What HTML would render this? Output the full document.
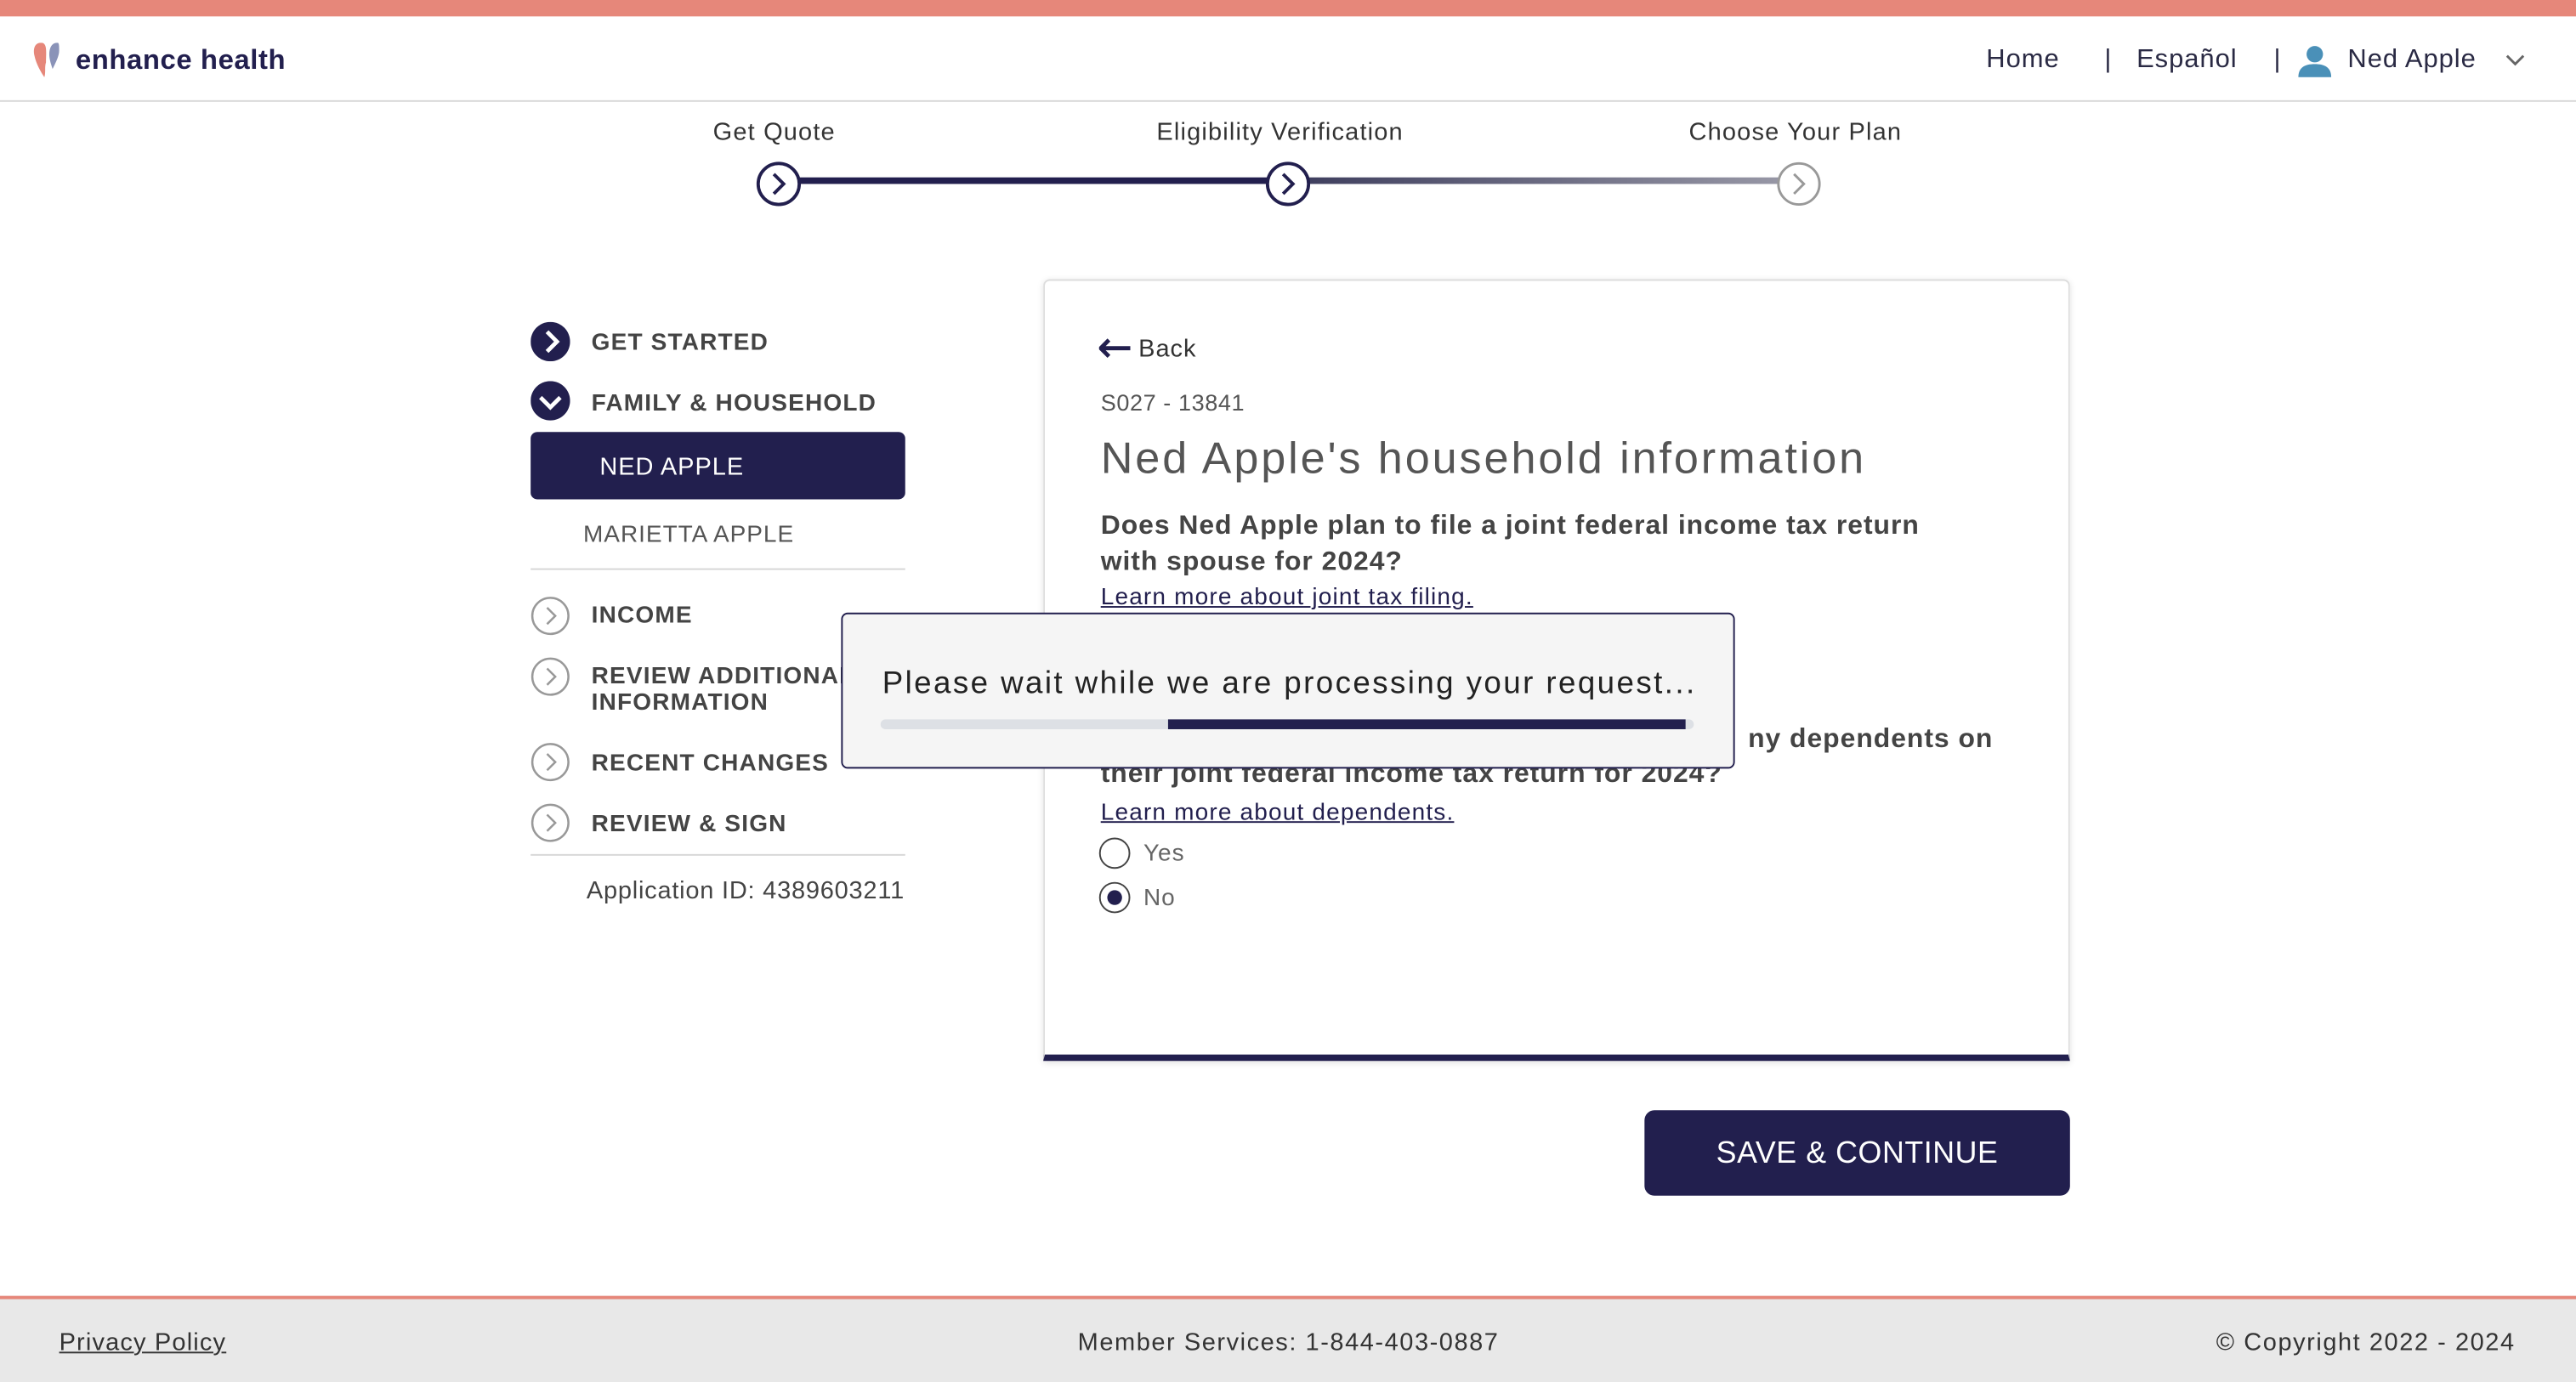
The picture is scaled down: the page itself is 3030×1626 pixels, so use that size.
<!DOCTYPE html>
<html><head><meta charset="utf-8"><style>
*{box-sizing:border-box;margin:0;padding:0}
html,body{width:3030px;height:1626px;overflow:hidden;background:#fff}
#w{width:1568px;height:841.5px;position:relative;transform:scale(1.9324);transform-origin:0 0;font-family:"Liberation Sans",sans-serif;color:#444}
.a{position:absolute}
.nav{color:#2a2a44;font-size:16px;letter-spacing:.5px}
.side{font-weight:bold;font-size:14.5px;color:#444;letter-spacing:.6px}
</style></head><body><div id="w">
<div class="a" style="left:0;top:0;width:1568px;height:10px;background:#e6877a"></div>
<div class="a" style="left:0;top:61px;width:1568px;height:1px;background:#d9d9d9"></div>
<svg class="a" style="left:20px;top:26px" width="24" height="22" viewBox="0 0 24 22"><path d="M5 0C1 0 0 4 1 8c1 5 4 10 6 13 1-3 0-6 1-9C8 6 9 0 5 0z" fill="#e6877a"/><path d="M15 0c-4 0-5 4-5 7 0 3 1 6 2 9 2-4 4-8 4-11 0-3-0-5-1-5z" fill="#8a93b8"/></svg>
<div class="a" style="left:46px;top:27px;font-size:17px;font-weight:bold;color:#221f4e;letter-spacing:.3px">enhance health</div>
<div class="a nav" style="left:1209px;top:28px">Home</div>
<div class="a nav" style="left:1281px;top:28px">|&nbsp;&nbsp; Español</div>
<div class="a nav" style="left:1384px;top:28px">|</div>
<svg class="a" style="left:1398px;top:27px" width="22" height="20" viewBox="0 0 22 20"><circle cx="11" cy="6" r="5" fill="#4a90b8"/><path d="M1 20c0-6 4-8 10-8s10 2 10 8z" fill="#4a90b8"/></svg>
<div class="a nav" style="left:1429px;top:28px">Ned Apple</div>
<svg class="a" style="left:1525px;top:33px" width="12" height="8"><path d="M1 1l5 5 5-5" stroke="#666" fill="none" stroke-width="1.5"/></svg>

<div class="a" style="left:434px;top:72px;font-size:15px;color:#333;letter-spacing:.6px">Get Quote</div>
<div class="a" style="left:704px;top:72px;font-size:15px;color:#333;letter-spacing:.6px">Eligibility Verification</div>
<div class="a" style="left:1028px;top:72px;font-size:15px;color:#333;letter-spacing:.6px">Choose Your Plan</div>
<div class="a" style="left:474px;top:108px;width:310px;height:4px;background:#221f4e"></div>
<div class="a" style="left:784px;top:108px;width:310px;height:4px;background:linear-gradient(90deg,#3c3c5c,#9a9aa8)"></div>
<svg class="a" style="left:460px;top:98px" width="28" height="28"><circle cx="14" cy="14" r="12.5" fill="#fff" stroke="#221f4e" stroke-width="2"/><path d="M11 8l6 6-6 6" stroke="#221f4e" fill="none" stroke-width="2"/></svg>
<svg class="a" style="left:770px;top:98px" width="28" height="28"><circle cx="14" cy="14" r="12.5" fill="#fff" stroke="#221f4e" stroke-width="2"/><path d="M11 8l6 6-6 6" stroke="#221f4e" fill="none" stroke-width="2"/></svg>
<svg class="a" style="left:1081px;top:98px" width="28" height="28"><circle cx="14" cy="14" r="12.5" fill="#fff" stroke="#999" stroke-width="1.5"/><path d="M11 8l6 6-6 6" stroke="#999" fill="none" stroke-width="1.5"/></svg>

<svg class="a" style="left:323px;top:196px" width="24" height="24"><circle cx="12" cy="12" r="12" fill="#221f4e"/><path d="M10 6l6 6-6 6" stroke="#fff" fill="none" stroke-width="2.5"/></svg>
<div class="a side" style="left:360px;top:201px">GET STARTED</div>
<svg class="a" style="left:323px;top:232px" width="24" height="24"><circle cx="12" cy="12" r="12" fill="#221f4e"/><path d="M6 10l6 6 6-6" stroke="#fff" fill="none" stroke-width="2.5"/></svg>
<div class="a side" style="left:360px;top:238px">FAMILY &amp; HOUSEHOLD</div>
<div class="a" style="left:323px;top:263px;width:228px;height:41px;background:#221f4e;border-radius:4px;color:#fff;font-size:15px;padding:13px 0 0 42px;letter-spacing:.5px">NED APPLE</div>
<div class="a" style="left:355px;top:318px;font-size:14.5px;color:#555;letter-spacing:.5px">MARIETTA APPLE</div>
<div class="a" style="left:323px;top:346px;width:228px;height:1px;background:#d6d6d6"></div>
<svg class="a" style="left:323px;top:363px" width="24" height="24"><circle cx="12" cy="12" r="11" fill="none" stroke="#999" stroke-width="1.3"/><path d="M10 7l5 5-5 5" stroke="#999" fill="none" stroke-width="1.3"/></svg>
<div class="a side" style="left:360px;top:367px">INCOME</div>
<svg class="a" style="left:323px;top:400px" width="24" height="24"><circle cx="12" cy="12" r="11" fill="none" stroke="#999" stroke-width="1.3"/><path d="M10 7l5 5-5 5" stroke="#999" fill="none" stroke-width="1.3"/></svg>
<div class="a side" style="left:360px;top:404px;line-height:16px">REVIEW ADDITIONAL<br>INFORMATION</div>
<svg class="a" style="left:323px;top:452px" width="24" height="24"><circle cx="12" cy="12" r="11" fill="none" stroke="#999" stroke-width="1.3"/><path d="M10 7l5 5-5 5" stroke="#999" fill="none" stroke-width="1.3"/></svg>
<div class="a side" style="left:360px;top:457px">RECENT CHANGES</div>
<svg class="a" style="left:323px;top:489px" width="24" height="24"><circle cx="12" cy="12" r="11" fill="none" stroke="#999" stroke-width="1.3"/><path d="M10 7l5 5-5 5" stroke="#999" fill="none" stroke-width="1.3"/></svg>
<div class="a side" style="left:360px;top:494px">REVIEW &amp; SIGN</div>
<div class="a" style="left:323px;top:520px;width:228px;height:1px;background:#d6d6d6"></div>
<div class="a" style="left:357px;top:534px;font-size:15px;color:#444;letter-spacing:.4px">Application ID: 4389603211</div>

<div class="a" style="left:635px;top:170px;width:625px;height:476px;border:1.5px solid #ddd;border-bottom:4px solid #221f4e;border-radius:4px 4px 0 0;box-shadow:0 1px 4px rgba(0,0,0,.12)"></div>
<svg class="a" style="left:669px;top:206px" width="20" height="12"><path d="M1 6h18M6 1L1 6l5 5" stroke="#221f4e" fill="none" stroke-width="2.5"/></svg>
<div class="a" style="left:693px;top:204px;font-size:15px;color:#333;letter-spacing:.5px">Back</div>
<div class="a" style="left:670px;top:237px;font-size:14px;color:#555;letter-spacing:.3px">S027 - 13841</div>
<div class="a" style="left:670px;top:264px;font-size:27px;color:#555;letter-spacing:1.5px">Ned Apple's household information</div>
<div class="a" style="left:670px;top:310px;font-size:16.5px;font-weight:bold;color:#444;line-height:21.5px;width:560px;letter-spacing:.5px">Does Ned Apple plan to file a joint federal income tax return<br>with spouse for 2024?</div>
<div class="a" style="left:670px;top:356px;font-size:14.5px;color:#221f4e;text-decoration:underline;letter-spacing:.6px">Learn more about joint tax filing.</div>
<div class="a" style="left:1064px;top:441px;font-size:16.5px;font-weight:bold;color:#444;letter-spacing:.5px">ny dependents on</div>
<div class="a" style="left:670px;top:462px;font-size:16.5px;font-weight:bold;color:#444;letter-spacing:.5px">their joint federal income tax return for 2024?</div>
<div class="a" style="left:670px;top:487px;font-size:14.5px;color:#221f4e;text-decoration:underline;letter-spacing:.6px">Learn more about dependents.</div>
<div class="a" style="left:669px;top:510px;width:19px;height:19px;border:1.5px solid #444;border-radius:50%"></div>
<div class="a" style="left:696px;top:512px;font-size:14.5px;color:#666;letter-spacing:.5px">Yes</div>
<div class="a" style="left:669px;top:537px;width:19px;height:19px;border:1.5px solid #444;border-radius:50%"><div style="margin:3.5px;width:9px;height:9px;border-radius:50%;background:#221f4e"></div></div>
<div class="a" style="left:696px;top:539px;font-size:14.5px;color:#666;letter-spacing:.5px">No</div>

<div class="a" style="left:512px;top:373px;width:544px;height:95px;background:#f5f5f5;border:1.5px solid #221f4e;border-radius:4px"></div>
<div class="a" style="left:537px;top:406px;font-size:19px;color:#222;letter-spacing:1.25px">Please wait while we are processing your request...</div>
<div class="a" style="left:536px;top:438px;width:495px;height:6px;background:#dde0e5;border-radius:3px"></div>
<div class="a" style="left:711px;top:438px;width:315px;height:6px;background:#221f4e"></div>

<div class="a" style="left:1001px;top:676px;width:259px;height:52px;background:#221f4e;border-radius:6px;color:#fff;font-size:18.5px;text-align:center;line-height:52px;letter-spacing:.3px">SAVE &amp; CONTINUE</div>

<div class="a" style="left:0;top:789px;width:1568px;height:53px;background:#e8e8e8;border-top:2px solid #e6877a"></div>
<div class="a" style="left:36px;top:809px;font-size:15px;color:#333;text-decoration:underline;letter-spacing:.6px">Privacy Policy</div>
<div class="a" style="left:656px;top:809px;font-size:15px;color:#333;letter-spacing:.8px">Member Services: 1-844-403-0887</div>
<div class="a" style="left:1349px;top:809px;font-size:15px;color:#333;letter-spacing:.8px">© Copyright 2022 - 2024</div>
</div></body></html>
